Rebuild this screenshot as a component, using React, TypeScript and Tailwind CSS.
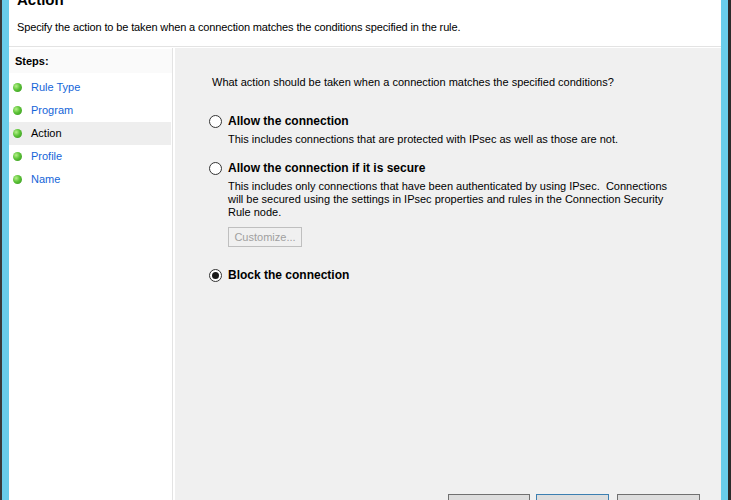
import React from "react";

const steps = ["Rule Type", "Program", "Action", "Profile", "Name"];

function Bullet() {
  return (
    <span className="w-[9px] h-[9px] rounded-full shrink-0 bg-[radial-gradient(circle_at_35%_35%,#b6f08a_0%,#5cc337_45%,#2f8f1a_100%)]" />
  );
}

function Radio({ checked }: { checked?: boolean }) {
  return (
    <span className="w-[13px] h-[13px] rounded-full border border-[#333333] bg-white flex items-center justify-center shrink-0">
      {checked && <span className="w-[7px] h-[7px] rounded-full bg-[#1a1a1a]" />}
    </span>
  );
}

export default function App() {
  return (
    <div className="w-[731px] h-[500px] overflow-hidden flex bg-[#2b2b2b] font-['Liberation_Sans',Arial,sans-serif] text-[11px] text-black">
      <div className="w-[2px] bg-[#3a3a3a]" />
      <div className="w-[7px] bg-[#69cdeb]" />
      <div className="w-[712px] flex flex-col bg-white">
        {/* header */}
        <div className="h-[47px] shrink-0 px-[8px] border-b border-[#e3e3e3] flex flex-col">
          <div className="mt-[-9px] font-bold text-[15px] leading-[18px]">Action</div>
          <div className="mt-[11px] leading-[14px] tracking-[-0.13px]">
            Specify the action to be taken when a connection matches the conditions specified in the rule.
          </div>
        </div>
        <div className="h-[1px] bg-white" />
        {/* body */}
        <div className="flex-1 flex">
          <div className="w-[164px] bg-white border-r border-[#e3e3e3] flex flex-col">
            <div className="h-[24px] mt-[1px] px-[6px] flex items-center font-bold bg-[#fafafa]">Steps:</div>
            <div className="flex flex-col pt-[3px]">
              {steps.map((s) => (
                <div
                  key={s}
                  className={`h-[23px] flex items-center gap-[9px] pl-[4px] ${
                    s === "Action" ? "bg-[#eeeeee] text-black mr-[1px]" : "text-[#1565d8]"
                  }`}
                >
                  <Bullet />
                  <span>{s}</span>
                </div>
              ))}
            </div>
          </div>
          <div className="w-[2px] bg-white" />
          <div className="flex-1 bg-[#f0f0f0] flex flex-col pl-[34px] pr-[21px]">
            <div className="mt-[27px] ml-[3px] leading-[14px]">
              What action should be taken when a connection matches the specified conditions?
            </div>
            <div className="mt-[25px] flex items-center gap-[6px]">
              <Radio />
              <span className="font-bold text-[12px] leading-[15px]">Allow the connection</span>
            </div>
            <div className="ml-[19px] mt-[4px] leading-[13px]">
              This includes connections that are protected with IPsec as well as those are not.
            </div>
            <div className="mt-[15px] flex items-center gap-[6px]">
              <Radio />
              <span className="font-bold text-[12px] leading-[15px]">Allow the connection if it is secure</span>
            </div>
            <div className="ml-[19px] mt-[4px] leading-[13px] w-[442px]">
              This includes only connections that have been authenticated by using IPsec.&nbsp; Connections will be
              secured using the settings in IPsec properties and rules in the Connection Security Rule node.
            </div>
            <div className="ml-[19px] mt-[8px] w-[74px] h-[20px] border border-[#bfbfbf] bg-[#f0f0f0] text-[#a0a0a0] flex items-center justify-center">
              Customize...
            </div>
            <div className="mt-[21px] flex items-center gap-[6px]">
              <Radio checked />
              <span className="font-bold text-[12px] leading-[15px]">Block the connection</span>
            </div>
            <div className="flex-1" />
            <div className="flex justify-end gap-[6px] mb-[-10px]">
              <div className="w-[82px] h-[16px] border border-[#707070] bg-[#dddddd]" />
              <div className="w-[73px] h-[16px] border border-[#3c7fb1] bg-[#dddddd] mr-[2px]" />
              <div className="w-[83px] h-[16px] border border-[#707070] bg-[#dddddd]" />
            </div>
          </div>
        </div>
      </div>
      <div className="w-[7px] bg-[#69cdeb]" />
      <div className="w-[3px] bg-[#2b2b2b]" />
    </div>
  );
}
